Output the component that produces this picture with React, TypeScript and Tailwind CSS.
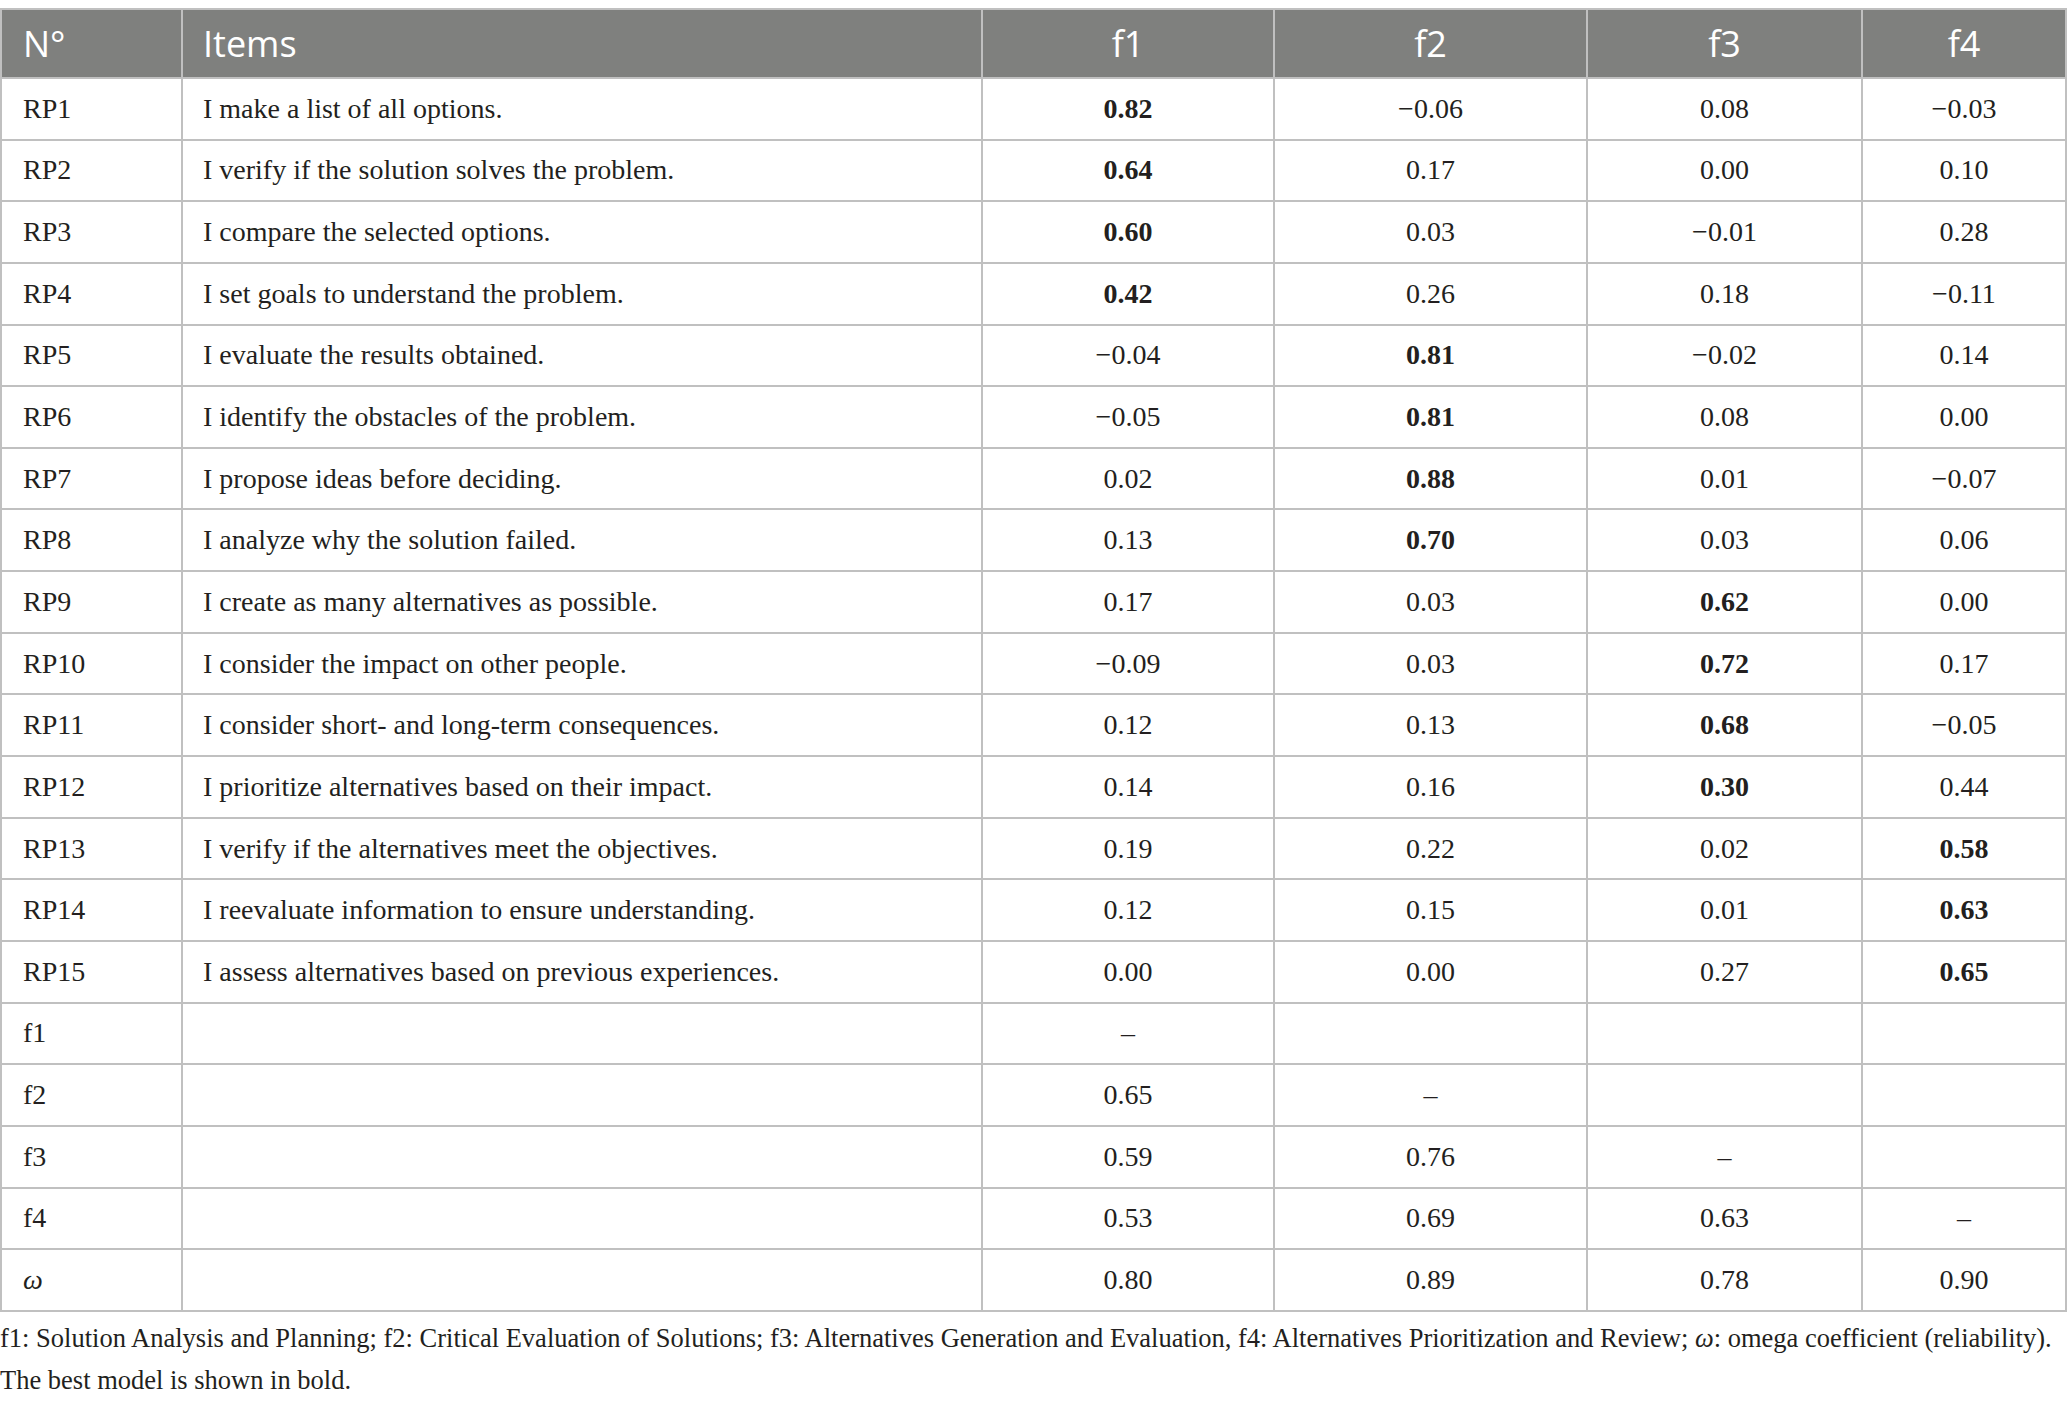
import React from "react";

type Cell = { v: string; b?: boolean };

const M = "\u2212";
const D = "\u2013";

const rows: { id: string; item: string; vals: Cell[]; italic?: boolean }[] = [
  { id: "RP1", item: "I make a list of all options.", vals: [{ v: "0.82", b: true }, { v: M + "0.06" }, { v: "0.08" }, { v: M + "0.03" }] },
  { id: "RP2", item: "I verify if the solution solves the problem.", vals: [{ v: "0.64", b: true }, { v: "0.17" }, { v: "0.00" }, { v: "0.10" }] },
  { id: "RP3", item: "I compare the selected options.", vals: [{ v: "0.60", b: true }, { v: "0.03" }, { v: M + "0.01" }, { v: "0.28" }] },
  { id: "RP4", item: "I set goals to understand the problem.", vals: [{ v: "0.42", b: true }, { v: "0.26" }, { v: "0.18" }, { v: M + "0.11" }] },
  { id: "RP5", item: "I evaluate the results obtained.", vals: [{ v: M + "0.04" }, { v: "0.81", b: true }, { v: M + "0.02" }, { v: "0.14" }] },
  { id: "RP6", item: "I identify the obstacles of the problem.", vals: [{ v: M + "0.05" }, { v: "0.81", b: true }, { v: "0.08" }, { v: "0.00" }] },
  { id: "RP7", item: "I propose ideas before deciding.", vals: [{ v: "0.02" }, { v: "0.88", b: true }, { v: "0.01" }, { v: M + "0.07" }] },
  { id: "RP8", item: "I analyze why the solution failed.", vals: [{ v: "0.13" }, { v: "0.70", b: true }, { v: "0.03" }, { v: "0.06" }] },
  { id: "RP9", item: "I create as many alternatives as possible.", vals: [{ v: "0.17" }, { v: "0.03" }, { v: "0.62", b: true }, { v: "0.00" }] },
  { id: "RP10", item: "I consider the impact on other people.", vals: [{ v: M + "0.09" }, { v: "0.03" }, { v: "0.72", b: true }, { v: "0.17" }] },
  { id: "RP11", item: "I consider short- and long-term consequences.", vals: [{ v: "0.12" }, { v: "0.13" }, { v: "0.68", b: true }, { v: M + "0.05" }] },
  { id: "RP12", item: "I prioritize alternatives based on their impact.", vals: [{ v: "0.14" }, { v: "0.16" }, { v: "0.30", b: true }, { v: "0.44" }] },
  { id: "RP13", item: "I verify if the alternatives meet the objectives.", vals: [{ v: "0.19" }, { v: "0.22" }, { v: "0.02" }, { v: "0.58", b: true }] },
  { id: "RP14", item: "I reevaluate information to ensure understanding.", vals: [{ v: "0.12" }, { v: "0.15" }, { v: "0.01" }, { v: "0.63", b: true }] },
  { id: "RP15", item: "I assess alternatives based on previous experiences.", vals: [{ v: "0.00" }, { v: "0.00" }, { v: "0.27" }, { v: "0.65", b: true }] },
  { id: "f1", item: "", vals: [{ v: D }, { v: "" }, { v: "" }, { v: "" }] },
  { id: "f2", item: "", vals: [{ v: "0.65" }, { v: D }, { v: "" }, { v: "" }] },
  { id: "f3", item: "", vals: [{ v: "0.59" }, { v: "0.76" }, { v: D }, { v: "" }] },
  { id: "f4", item: "", vals: [{ v: "0.53" }, { v: "0.69" }, { v: "0.63" }, { v: D }] },
  { id: "\u03c9", item: "", vals: [{ v: "0.80" }, { v: "0.89" }, { v: "0.78" }, { v: "0.90" }], italic: true },
];

const serif = "font-['Liberation_Serif','Times_New_Roman',serif]";
const sans = "font-['Open_Sans','Noto_Sans',sans-serif]";

export default function App() {
  return (
    <div className="w-[2067px] bg-white pt-[8px] text-[#231f20]">
      <table className="w-[2067px] table-fixed border-collapse">
        <colgroup>
          <col className="w-[181px]" />
          <col className="w-[800px]" />
          <col className="w-[292px]" />
          <col className="w-[313px]" />
          <col className="w-[275px]" />
          <col />
        </colgroup>
        <thead>
          <tr className={`h-[69px] bg-[#7f807e] text-white ${sans} text-[36px] font-normal`}>
            <th className="border-2 border-[#c0c0c0] pl-[21px] text-left font-normal">N°</th>
            <th className="border-2 border-[#c0c0c0] pl-[20px] text-left font-normal">Items</th>
            <th className="border-2 border-[#c0c0c0] text-center font-normal">f1</th>
            <th className="border-2 border-[#c0c0c0] text-center font-normal">f2</th>
            <th className="border-2 border-[#c0c0c0] text-center font-normal">f3</th>
            <th className="border-2 border-[#c0c0c0] text-center font-normal">f4</th>
          </tr>
        </thead>
        <tbody className={`${serif} text-[28px]`}>
          {rows.map((r) => (
            <tr key={r.id} className="h-[61.65px]">
              <td className={`border-2 border-[#c0c0c0] pl-[21px] ${r.italic ? "italic" : ""}`}>{r.id}</td>
              <td className="border-2 border-[#c0c0c0] pl-[20px]">{r.item}</td>
              {r.vals.map((c, i) => (
                <td key={i} className={`border-2 border-[#c0c0c0] text-center ${c.b ? "font-bold" : ""}`}>
                  {c.v}
                </td>
              ))}
            </tr>
          ))}
        </tbody>
      </table>
      <div className={`${serif} mt-[5px] text-[26.5px] leading-[42px] whitespace-nowrap`}>
        <div>
          f1: Solution Analysis and Planning; f2: Critical Evaluation of Solutions; f3: Alternatives Generation and Evaluation, f4: Alternatives Prioritization and Review; <i>ω</i>: omega coefficient (reliability).
        </div>
        <div>The best model is shown in bold.</div>
      </div>
    </div>
  );
}
